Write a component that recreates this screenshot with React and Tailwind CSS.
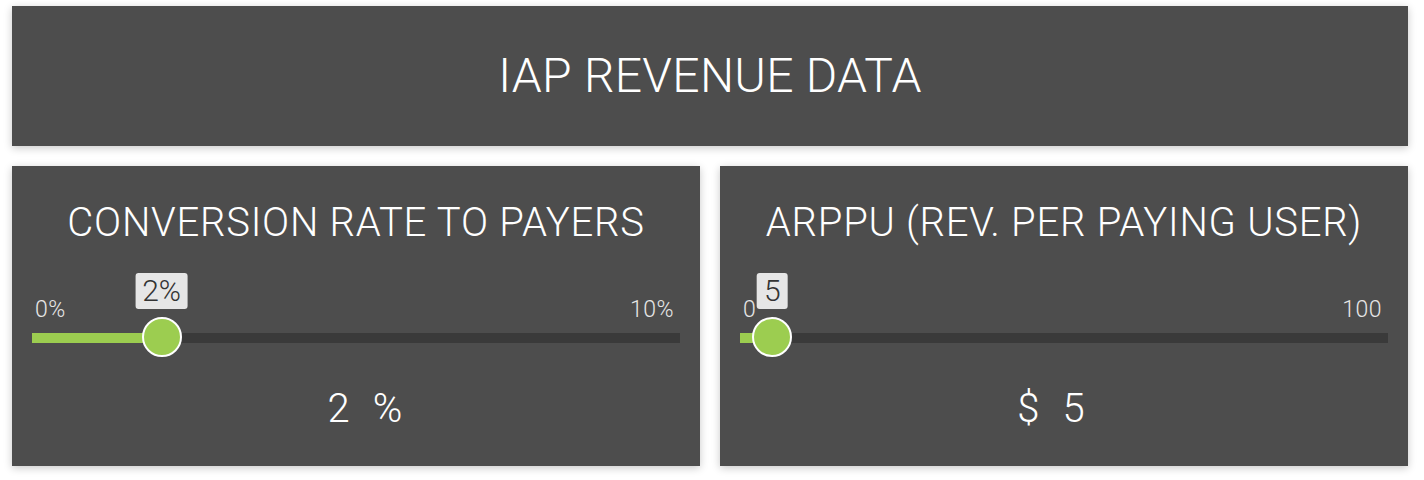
import React from "react";

const font = { fontFamily: "Roboto, 'Liberation Sans', sans-serif" };

function Slider({ min, max, value, fmt }) {
  const pct = ((value - min) / (max - min)) * 100;
  return (
    <div className="mx-[20px] mt-[55px] flex flex-col">
      <div className="flex justify-between pl-[3px] pr-[6px] text-[23px] leading-none font-light tracking-[0.5px] text-[#e6e6e6]">
        <span>{fmt(min)}</span>
        <span>{fmt(max)}</span>
      </div>
      <div className="relative mt-[12px] h-[10px] bg-[#3a3a3a]">
        <div className="h-full bg-[#9ccd50]" style={{ width: `${pct}%` }} />
        <div
          className="absolute top-[-60px] h-[36px] -translate-x-1/2 rounded-[3px] bg-[#e6e6e6] px-[7px] text-[30px] leading-[36px] font-light text-[#333]"
          style={{ left: `${pct}%` }}
        >
          {fmt(value)}
        </div>
        <div
          className="absolute top-[-16px] h-[40px] w-[40px] -translate-x-1/2 rounded-full border-2 border-white bg-[#9ccd50]"
          style={{ left: `${pct}%` }}
        />
      </div>
    </div>
  );
}

function Panel({ title, children, value, padCls }) {
  return (
    <div className="flex h-[300px] flex-col bg-[#4d4d4d] pt-[37px] shadow-[0_2px_8px_rgba(0,0,0,0.22)]">
      <div className="text-center text-[40px] leading-none font-light tracking-[0.75px] text-white">{title}</div>
      {children}
      <div className={`mt-[46px] flex justify-center gap-[23px] text-[40px] leading-none font-light text-white ${padCls}`}>
        {value}
      </div>
    </div>
  );
}

export default function App() {
  return (
    <div className="flex min-h-[480px] flex-col gap-[20px] bg-white pt-[6px] pl-[12px] pr-[16px]" style={font}>
      <div className="flex h-[140px] items-center justify-center bg-[#4d4d4d] shadow-[0_2px_8px_rgba(0,0,0,0.22)]">
        <div className="text-[48px] leading-none font-light tracking-[0.3px] text-white">IAP REVENUE DATA</div>
      </div>
      <div className="grid grid-cols-2 gap-[20px]">
        <Panel
          title="CONVERSION RATE TO PAYERS"
          padCls="pl-[18px]"
          value={
            <>
              <span>2</span>
              <span>%</span>
            </>
          }
        >
          <Slider min={0} max={10} value={2} fmt={(v) => `${v}%`} />
        </Panel>
        <Panel
          title="ARPPU (REV. PER PAYING USER)"
          padCls="pr-[26px]"
          value={
            <>
              <span>$</span>
              <span>5</span>
            </>
          }
        >
          <Slider min={0} max={100} value={5} fmt={(v) => `${v}`} />
        </Panel>
      </div>
    </div>
  );
}
